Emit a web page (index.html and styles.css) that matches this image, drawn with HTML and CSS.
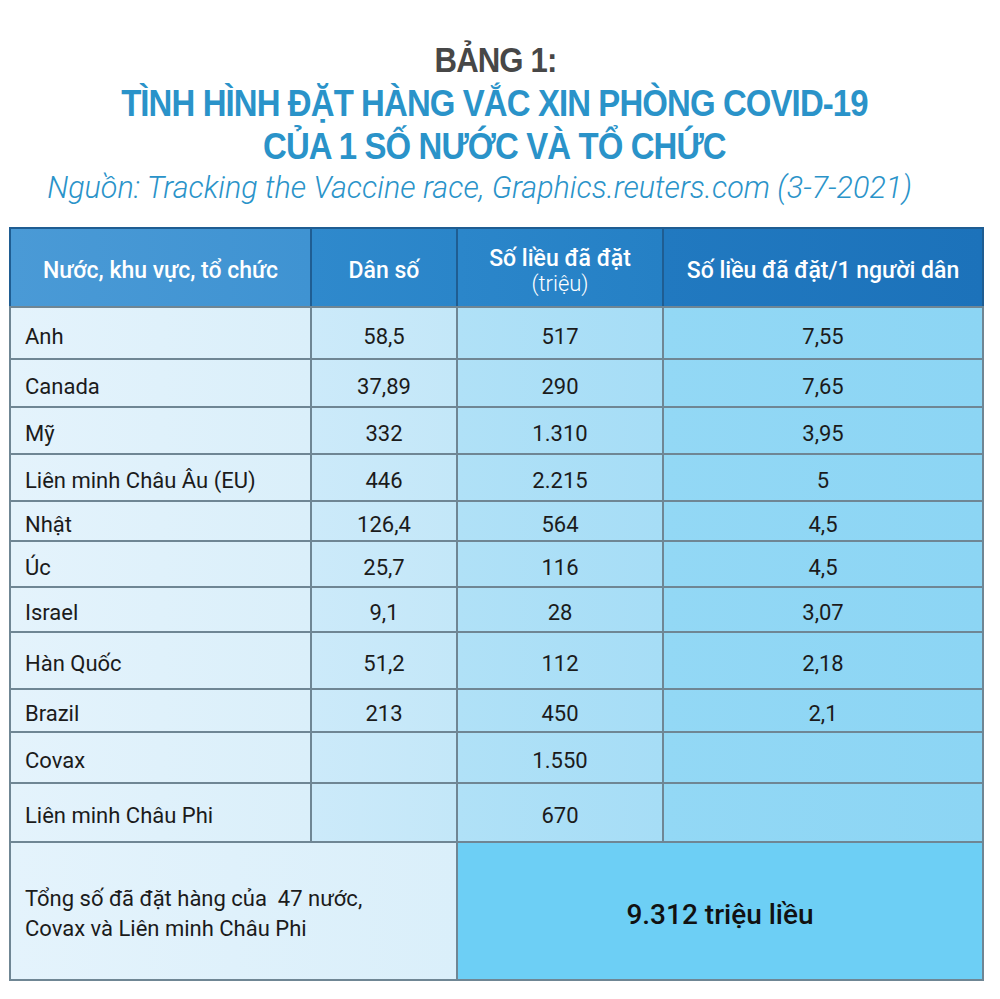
FILE: index.html
```html
<!DOCTYPE html>
<html lang="vi">
<head>
<meta charset="utf-8">
<link rel="stylesheet" href="styles.css">
</head>
<body>
<header class="heading">
  <div class="label"><span class="squeeze">BẢNG 1:</span></div>
  <h1 class="title"><span class="squeeze">TÌNH HÌNH ĐẶT HÀNG VẮC XIN PHÒNG COVID-19<br>CỦA 1 SỐ NƯỚC VÀ TỔ CHỨC</span></h1>
  <p class="source">Nguồn: Tracking the Vaccine race, Graphics.reuters.com (3-7-2021)</p>
</header>
<div class="table">
  <div class="th c1">Nước, khu vực, tổ chức</div>
  <div class="th c2">Dân số</div>
  <div class="th c3">Số liều đã đặt<span class="unit">(triệu)</span></div>
  <div class="th c4">Số liều đã đặt/1 người dân</div>

  <div class="td c1">Anh</div><div class="td c2">58,5</div><div class="td c3">517</div><div class="td c4">7,55</div>
  <div class="td c1">Canada</div><div class="td c2">37,89</div><div class="td c3">290</div><div class="td c4">7,65</div>
  <div class="td c1">Mỹ</div><div class="td c2">332</div><div class="td c3">1.310</div><div class="td c4">3,95</div>
  <div class="td c1">Liên minh Châu Âu (EU)</div><div class="td c2">446</div><div class="td c3">2.215</div><div class="td c4">5</div>
  <div class="td c1">Nhật</div><div class="td c2">126,4</div><div class="td c3">564</div><div class="td c4">4,5</div>
  <div class="td c1">Úc</div><div class="td c2">25,7</div><div class="td c3">116</div><div class="td c4">4,5</div>
  <div class="td c1">Israel</div><div class="td c2">9,1</div><div class="td c3">28</div><div class="td c4">3,07</div>
  <div class="td c1">Hàn Quốc</div><div class="td c2">51,2</div><div class="td c3">112</div><div class="td c4">2,18</div>
  <div class="td c1">Brazil</div><div class="td c2">213</div><div class="td c3">450</div><div class="td c4">2,1</div>
  <div class="td c1">Covax</div><div class="td c2"></div><div class="td c3">1.550</div><div class="td c4"></div>
  <div class="td c1">Liên minh Châu Phi</div><div class="td c2"></div><div class="td c3">670</div><div class="td c4"></div>

  <div class="td total-label">Tổng số đã đặt hàng của&nbsp; 47 nước,<br>Covax và Liên minh Châu Phi</div>
  <div class="td total-value">9.312 triệu liều</div>
</div>
</body>
</html>
```

FILE: styles.css
```css
html, body {
  margin: 0;
  padding: 0;
  background: #ffffff;
}

body {
  font-family: Roboto, "Noto Sans", "Liberation Sans", sans-serif;
  color: #1b1b1b;
}

.heading {
  text-align: center;
  padding-top: 38px;
  height: 227px;
  box-sizing: border-box;
}

.squeeze {
  display: inline-block;
  transform: scaleX(0.89);
  transform-origin: center;
}

.label {
  font-family: "Liberation Sans", Arial, sans-serif;
  font-weight: 700;
  font-size: 35px;
  line-height: 44px;
  letter-spacing: -1px;
  color: #474747;
  margin-left: -10px;
}

.title {
  margin: 0 0 0 -12px;
  font-family: "Liberation Sans", Arial, sans-serif;
  font-weight: 700;
  font-size: 37px;
  line-height: 43px;
  letter-spacing: -1px;
  color: #2a93c9;
}

.source {
  margin: 0 0 0 -41px;
  font-family: Roboto, sans-serif;
  font-weight: 300;
  font-style: italic;
  font-size: 30.5px;
  line-height: 40px;
  color: #2a93c9;
}

.table {
  display: grid;
  grid-template-columns: 299px 144px 204px 318px;
  grid-template-rows: 77px 50px 46px 45px 45px 38px 44px 43px 55px 41px 49px 57px 136px;
  gap: 2px;
  padding: 2px;
  width: 975px;
  box-sizing: border-box;
  margin-left: 9px;
  background: linear-gradient(to bottom, #1f5d92 0, #1f5d92 79px, #6f8694 79px, #6f8694 100%);
}

.th {
  display: flex;
  flex-direction: column;
  align-items: center;
  justify-content: center;
  color: #ffffff;
  font-weight: 500;
  font-size: 23px;
  line-height: 26px;
  padding-top: 7px;
  box-sizing: border-box;
}

.th.c1 { background: linear-gradient(to right, #4a9ad6, #3f93d2); }
.th.c2 { background: linear-gradient(to right, #2f89cc, #2a85c9); }
.th.c3 { background: linear-gradient(to right, #2b86ca, #2580c5); }
.th.c4 { background: linear-gradient(to right, #2179c0, #1c72ba); }

.unit {
  font-weight: 300;
  font-size: 22px;
  line-height: 24px;
}

.td {
  display: flex;
  align-items: center;
  justify-content: center;
  font-size: 22px;
  padding-top: 6px;
  box-sizing: border-box;
}

.td.c1 {
  justify-content: flex-start;
  padding-left: 14px;
  background: linear-gradient(to right, #e4f3fc, #daeffa);
}
.td.c2 { background: linear-gradient(to right, #cceafa, #c3e7f8); }
.td.c3 { background: linear-gradient(to right, #b0e1f7, #a6ddf6); }
.td.c4 { background: linear-gradient(to right, #93d8f5, #8cd5f4); }

.total-label {
  grid-column: 1 / 3;
  justify-content: flex-start;
  padding-left: 14px;
  line-height: 30px;
  background: linear-gradient(to right, #e4f3fc, #daeffa);
}

.total-value {
  grid-column: 3 / 5;
  font-size: 28px;
  font-weight: 500;
  background: #6dcff5;
  color: #111111;
}
```
